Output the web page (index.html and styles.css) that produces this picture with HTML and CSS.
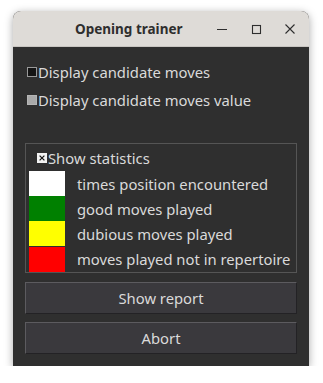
FILE: index.html
```html
<!DOCTYPE html>
<html lang="en">
<head>
    <meta charset="UTF-8">
    <title>Opening trainer</title>
    <link rel="stylesheet" href="styles.css">
</head>
<body>
    <div class="window">
        <!-- Title bar -->
        <div class="titlebar">
            <span class="title">Opening trainer</span>
            <div class="controls">
                <svg width="12" height="12" viewBox="0 0 12 12"><path d="M1 6.5h10" stroke="#2e2e2e" stroke-width="1.2"/></svg>
                <svg width="12" height="12" viewBox="0 0 12 12"><rect x="2.5" y="2.5" width="8" height="8" fill="none" stroke="#2e2e2e" stroke-width="1.1"/></svg>
                <svg width="12" height="12" viewBox="0 0 12 12"><path d="M1.5 1.5l9 9M10.5 1.5l-9 9" stroke="#2e2e2e" stroke-width="1.1"/></svg>
            </div>
        </div>

        <div class="content">
            <div class="check-row">
                <span class="box box-off"></span>Display candidate moves
            </div>
            <div class="check-row">
                <span class="box box-disabled"></span>Display candidate moves value
            </div>

            <!-- Statistics legend -->
            <div class="group">
                <div class="check-row stats-check">
                    <span class="box box-on">
                        <svg width="10" height="10" viewBox="0 0 10 10"><path d="M2 2l6 6M8 2l-6 6" stroke="#1a1a1a" stroke-width="1.6"/></svg>
                    </span>Show statistics
                </div>
                <div class="legend-row"><span class="swatch white"></span>times position encountered</div>
                <div class="legend-row"><span class="swatch green"></span>good moves played</div>
                <div class="legend-row"><span class="swatch yellow"></span>dubious moves played</div>
                <div class="legend-row"><span class="swatch red"></span>moves played not in repertoire</div>
            </div>

            <button class="btn">Show report</button>
            <button class="btn">Abort</button>
        </div>
    </div>
</body>
</html>
```

FILE: styles.css
```css
* { box-sizing: border-box; margin: 0; padding: 0; }

body {
    background: #ffffff;
    font-family: "Noto Sans", "Open Sans", sans-serif;
}

.window {
    margin: 11px 0 0 13px;
    width: 296px;
    height: 355px;
    background: #2f2f2f;
    border-radius: 8px 8px 0 0;
    box-shadow: 0 2px 8px rgba(0, 0, 0, 0.35);
    overflow: hidden;
}

.titlebar {
    height: 36px;
    background: #dedbd7;
    border-bottom: 1px solid #c8c5c1;
    display: flex;
    align-items: center;
}
.title {
    margin-left: 62px;
    font-size: 13.5px;
    font-weight: bold;
    color: #2e2e2e;
}
.controls {
    margin-left: auto;
    margin-right: 13px;
    display: flex;
    gap: 22px;
}

.content {
    padding: 15px 12px 0 12px;
    color: #dadada;
    font-size: 14.8px;
    white-space: nowrap;
}

.check-row {
    display: flex;
    align-items: center;
    height: 20px;
    margin-left: 2px;
    margin-bottom: 8px;
}

.box {
    width: 10px;
    height: 10px;
    margin-right: 1px;
    display: flex;
    align-items: center;
    justify-content: center;
}
.box-off { background: #141414; border: 1px solid #9a9a9a; }
.box-disabled { background: #a9a9a9; border: 1px solid #b5b5b5; }
.box-on { background: #f2f2f2; border: 1px solid #f2f2f2; }

.group {
    margin-top: 33px;
    border: 1px solid #555555;
    padding: 4px 0 0 3px;
    height: 130px;
}
.stats-check {
    margin-left: 8px;
    margin-bottom: 3px;
}

.legend-row {
    display: flex;
    align-items: center;
    height: 25px;
}
.swatch {
    flex: none;
    width: 36px;
    height: 25px;
    margin-right: 12px;
}
.white { background: #ffffff; }
.green { background: #008000; }
.yellow { background: #ffff00; }
.red { background: #ff0000; margin-top: 1px; }

.btn {
    display: block;
    width: 100%;
    height: 32px;
    margin-top: 9px;
    background: #3a393d;
    color: #dadada;
    font-family: inherit;
    font-size: 14.8px;
    border: 1px solid #232225;
    border-top-color: #5c5b5f;
    border-left-color: #5c5b5f;
}
.btn + .btn { margin-top: 8px; }
```
